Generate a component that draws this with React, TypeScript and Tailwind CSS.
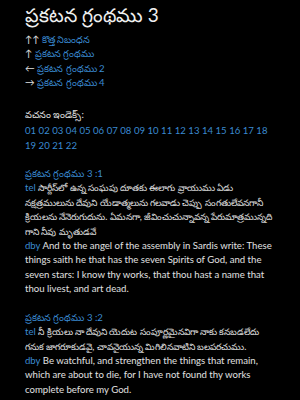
const chapters = Array.from({ length: 22 }, (_, i) => String(i + 1).padStart(2, "0"))

const verses = [
  {
    ref: "ప్రకటన గ్రంథము 3 :1",
    tel: "సార్దీస్‌లో ఉన్న సంఘపు దూతకు ఈలాగు వ్రాయుము ఏడు నక్షత్రములును దేవుని యేడాత్మలును గలవాడు చెప్పు సంగతులేవనగానీ క్రియలను నేనెరుగుదును. ఏమనగా, జీవించుచున్నావన్న పేరుమాత్రమున్నది గాని నీవు మృతుడవే",
    dby: "And to the angel of the assembly in Sardis write: These things saith he that has the seven Spirits of God, and the seven stars: I know thy works, that thou hast a name that thou livest, and art dead.",
  },
  {
    ref: "ప్రకటన గ్రంథము 3 :2",
    tel: "నీ క్రియలు నా దేవుని యెదుట సంపూర్ణమైనవిగా నాకు కనబడలేదు గనుక జాగరూకుడవై, చావనైయున్న మిగిలినవాటిని బలపరచుము.",
    dby: "Be watchful, and strengthen the things that remain, which are about to die, for I have not found thy works complete before my God.",
  },
]

export default function App() {
  return (
    <div className="min-h-[400px] w-[300px] bg-black pl-[25px] pr-[20px] pt-[3px] text-[9.6px] leading-[14.4px] text-[#e0e0e0] font-['Lato',sans-serif]">
      <h1 className="text-[19px] leading-[24px] text-[#f0f0f0]">ప్రకటన గ్రంథము 3</h1>
      <div className="mt-[6px] flex flex-col">
        <div>↑↑ <a className="text-[#3a8ad0]">కొత్త నిబంధన</a></div>
        <div>↑ <a className="text-[#3a8ad0]">ప్రకటన గ్రంథము</a></div>
        <div>← <a className="text-[#3a8ad0]">ప్రకటన గ్రంథము 2</a></div>
        <div>→ <a className="text-[#3a8ad0]">ప్రకటన గ్రంథము 4</a></div>
      </div>
      <div className="mt-[17px]">వచనం ఇండెక్స్:</div>
      <div className="text-[#3a8ad0] leading-[15px] mt-[1px]">
        {chapters.map((c) => (
          <a key={c}>{c} </a>
        ))}
      </div>
      {verses.map((v) => (
        <div key={v.ref} className="mt-[14px]">
          <div className="text-[#3a8ad0]">{v.ref}</div>
          <div><span className="text-[#3a8ad0]">tel</span> <span className="text-[9px]">{v.tel}</span></div>
          <div><span className="text-[#3a8ad0]">dby</span> {v.dby}</div>
        </div>
      ))}
    </div>
  )
}
